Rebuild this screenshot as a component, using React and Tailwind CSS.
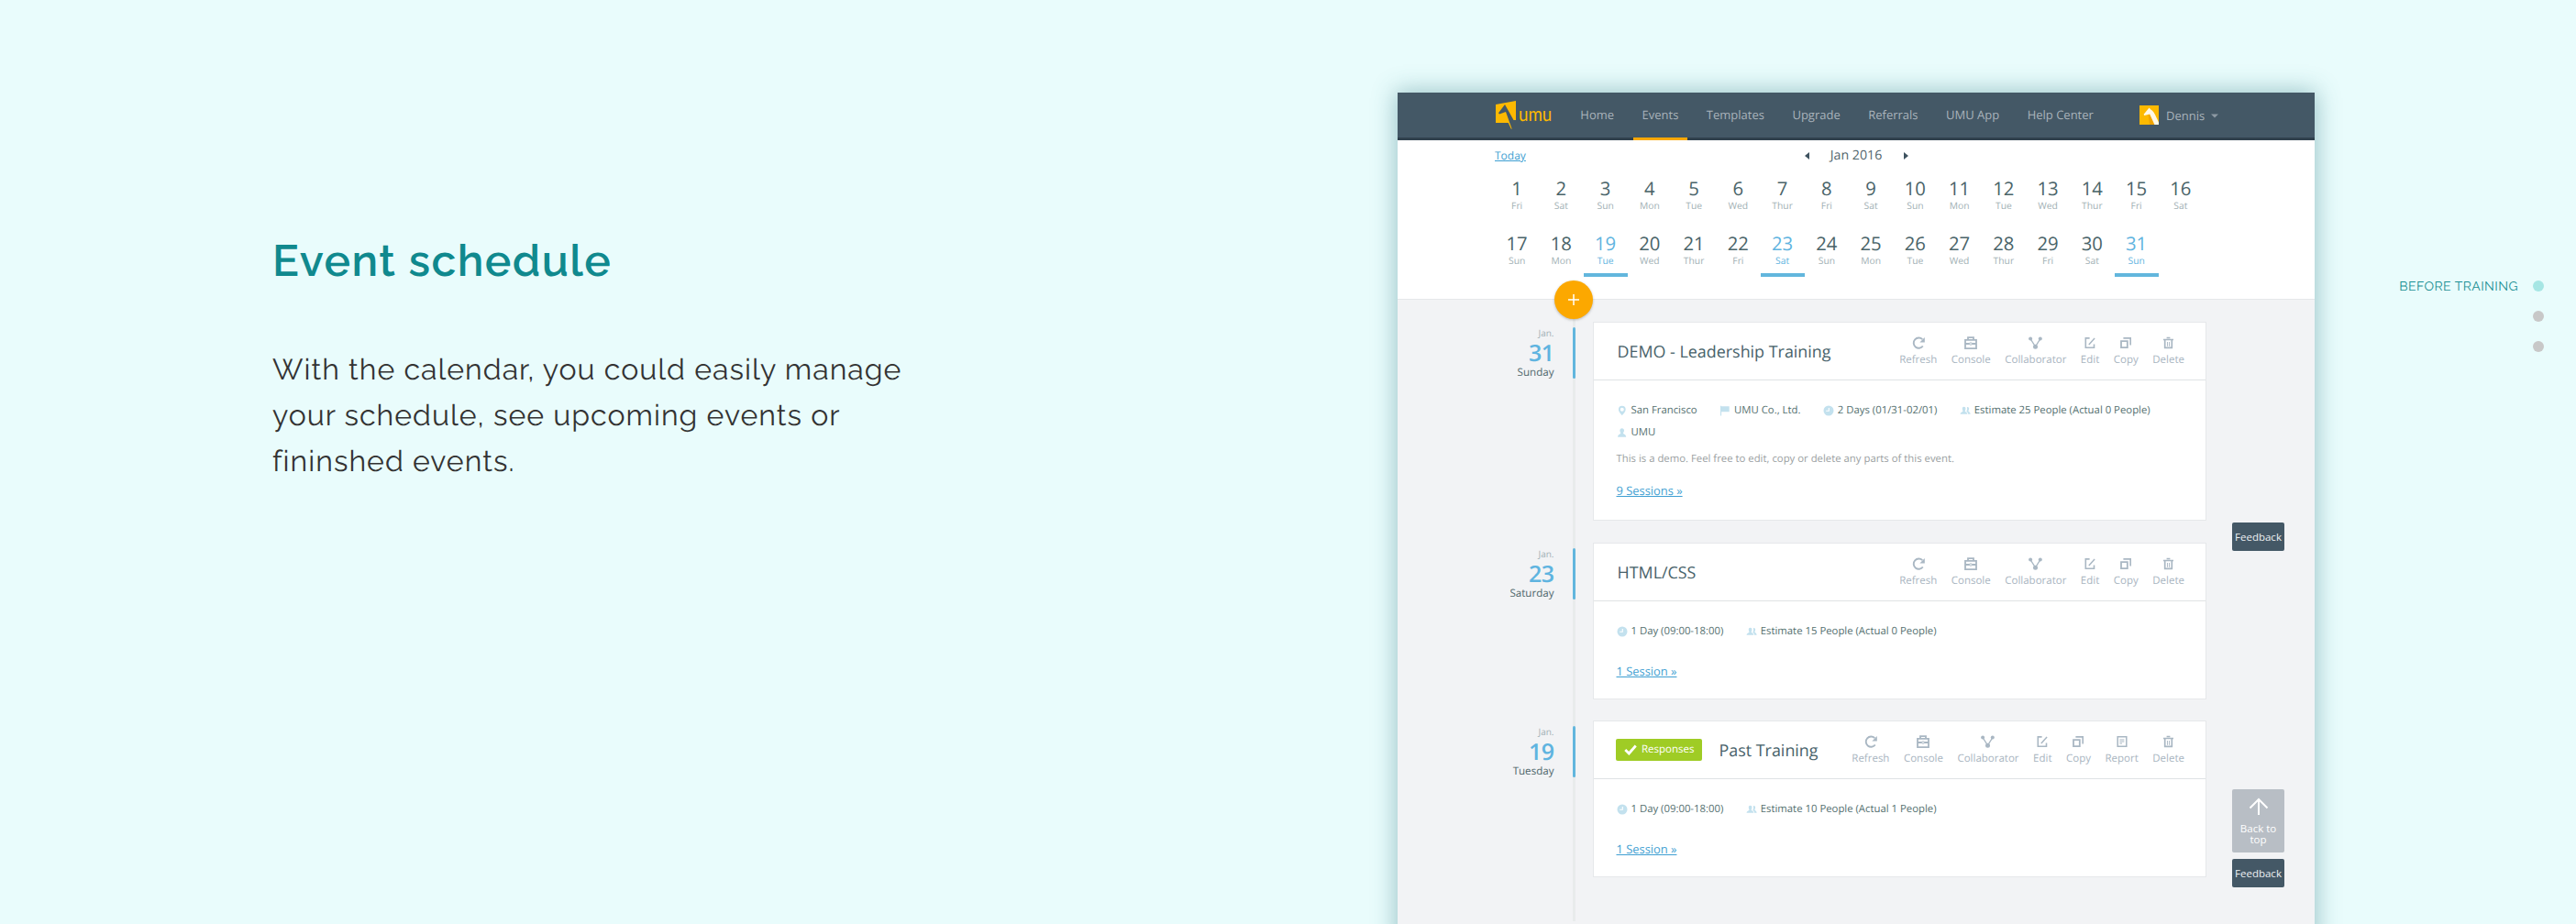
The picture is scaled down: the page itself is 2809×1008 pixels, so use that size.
const BLUE = 'text-[#5fb4e0]';

const Svg = ({ w, h, vb, className = '', children }) => (
  <svg width={w} height={h} viewBox={vb || `0 0 ${w} ${h}`} fill="none" className={`shrink-0 ${className}`}>
    {children}
  </svg>
);

const ICONS = {
  Refresh: (
    <Svg w={14} h={14}>
      <path d="M11.800 10.500A5.600 5.600 0 1 1 11.300 3.200" stroke="#a9b7c3" strokeWidth="1.900" />
      <path d="M13.800 1v5.400H8.400z" fill="#a9b7c3" />
    </Svg>
  ),
  Console: (
    <Svg w={14} h={14}>
      <path d="M1 3.800h12v9.300H1zM4 3.500V1.200h6v2.300M1 8h4.200M8.800 8H13" stroke="#a9b7c3" strokeWidth="1.800" />
      <ellipse cx="7" cy="8" rx="1.800" ry="1.100" stroke="#a9b7c3" />
    </Svg>
  ),
  Collaborator: (
    <Svg w={15} h={14}>
      <path d="M2.200 2.800 7.500 11l5.200-8.200" stroke="#a9b7c3" strokeWidth="1.300" />
      <circle cx="2.100" cy="2.600" r="2" fill="#a9b7c3" />
      <circle cx="12.800" cy="2.600" r="2" fill="#a9b7c3" />
      <circle cx="7.500" cy="11.300" r="2.500" fill="#a9b7c3" />
    </Svg>
  ),
  Edit: (
    <Svg w={12} h={14}>
      <path d="M5.600 1.900H1.300v10.400h9.200V8.600" stroke="#a9b7c3" strokeWidth="1.600" />
      <path d="m4.800 9 6.300-6.900" stroke="#a9b7c3" strokeWidth="1.500" />
    </Svg>
  ),
  Copy: (
    <Svg w={12} h={14}>
      <path d="M1 5.200h6.800v7H1z" stroke="#a9b7c3" strokeWidth="1.800" />
      <path d="M3.400 1.900h7.800v7.600" stroke="#a9b7c3" strokeWidth="1.600" />
    </Svg>
  ),
  Report: (
    <Svg w={12} h={14}>
      <path d="M1.200 1.700h9.600v10.600H1.200z" stroke="#a9b7c3" strokeWidth="1.500" />
      <path d="M3.400 5h5M3.400 7h5M3.400 9h2.600" stroke="#a9b7c3" />
    </Svg>
  ),
  Delete: (
    <Svg w={11} h={14}>
      <path d="M0 3.500h11M3.600 1.500h3.800" stroke="#a9b7c3" strokeWidth="1.500" />
      <path d="M1.700 4v8.300h7.600V4" stroke="#a9b7c3" strokeWidth="1.700" />
      <path d="M4.500 6v4.800M6.500 6v4.800" stroke="#a9b7c3" strokeWidth=".9" />
    </Svg>
  ),
};

const INFO = {
  pin: (
    <Svg w={12} h={12}>
      <path fillRule="evenodd" d="M5.800.8a3.900 3.900 0 0 0-3.900 3.900c0 2.600 2.400 4.300 3.900 6.500 1.500-2.200 3.900-3.900 3.900-6.500A3.900 3.900 0 0 0 5.800.8zm0 1.900a2 2 0 1 1 0 4 2 2 0 0 1 0-4z" fill="#c3e1ee" />
    </Svg>
  ),
  flag: (
    <Svg w={12} h={12}>
      <path d="M1 .7h1v.5h8.700v6H2.100v4.300H1z" fill="#c3e1ee" />
    </Svg>
  ),
  clock: (
    <Svg w={12} h={12}>
      <circle cx="6" cy="6" r="5.500" fill="#c3e1ee" />
      <path d="M6.300 3v3.300H3.200" stroke="#fff" strokeWidth="1.100" />
    </Svg>
  ),
  people: (
    <Svg w={12} h={12} vb="0 0 12.500 12">
      <path d="M4.800 1.500c1.300 0 1.900.9 1.900 2.100S6 6 5.900 6.500c0 1 2.800 1 2.800 3.500H.6C.6 7.500 3.700 7.500 3.700 6.500 3.600 6 2.900 4.800 2.900 3.600s.6-2.100 1.900-2.100z" fill="#c3e1ee" />
      <path d="M8.300 1.800c1.500-.3 2.300.6 2.300 1.900s-.8 2-.8 2.900c0 .8 2.400 1 2.400 3.400H9.500c0-1.800-1-2.200-1.800-2.900.1-1.200.7-1.200.7-2.900z" fill="#c3e1ee" />
    </Svg>
  ),
  person: (
    <Svg w={12} h={12}>
      <path d="M5.700 1.200c1.500 0 2.300 1 2.300 2.400S7.200 6 7 6.500c0 1.300 3.200 1 3.200 4.200H1.100c0-3.200 3.200-2.900 3.200-4.200-.2-.5-.9-1.500-.9-2.900s.8-2.400 2.300-2.400z" fill="#c3e1ee" />
    </Svg>
  ),
};

const NAV = ['Home', 'Events', 'Templates', 'Upgrade', 'Referrals', 'UMU App', 'Help Center'];
const WEEK = ['Fri', 'Sat', 'Sun', 'Mon', 'Tue', 'Wed', 'Thur'];
const DAYS = Array.from({ length: 31 }, (_, i) => ({ n: i + 1, w: WEEK[i % 7], on: [19, 23, 31].includes(i + 1) }));

const EVENTS = [
  {
    day: '31', week: 'Sunday', title: 'DEMO - Leadership Training', row: 'h-[241px] pt-[24px]', card: 'h-[217px]',
    info: [['pin', 'San Francisco'], ['flag', 'UMU Co., Ltd.'], ['clock', '2 Days (01/31-02/01)'], ['people', 'Estimate 25 People (Actual 0 People)'], ['person', 'UMU']],
    text: 'This is a demo. Feel free to edit, copy or delete any parts of this event.',
    link: '9 Sessions »', actions: ['Refresh', 'Console', 'Collaborator', 'Edit', 'Copy', 'Delete'],
  },
  {
    day: '23', week: 'Saturday', title: 'HTML/CSS', row: 'h-[195px] pt-[24px]', card: 'h-[171px]',
    info: [['clock', '1 Day (09:00-18:00)'], ['people', 'Estimate 15 People (Actual 0 People)']],
    link: '1 Session »', actions: ['Refresh', 'Console', 'Collaborator', 'Edit', 'Copy', 'Delete'],
  },
  {
    day: '19', week: 'Tuesday', title: 'Past Training', badge: 'Responses', row: 'h-[242px] pt-[23px]', card: 'h-[171px]',
    info: [['clock', '1 Day (09:00-18:00)'], ['people', 'Estimate 10 People (Actual 1 People)']],
    link: '1 Session »', actions: ['Refresh', 'Console', 'Collaborator', 'Edit', 'Copy', 'Report', 'Delete'],
  },
];

function Header() {
  return (
    <header className="h-[52px] bg-[#445866] border-b-[3px] border-[#30404d] flex pl-[106px]">
      <div className="flex h-[34px] w-[84px] mt-[8px]">
        <Svg w={24} h={34}>
          <path d="M1 5 23 1v21h-2.500L11 5 4 14.300l1 1.200 7-2.500 6.700 18.800-1-.2-3-6.600H1z" fill="#fdb900" />
        </Svg>
        <span className="ml-[1.500px] origin-left scale-x-[0.870] font-['Lato',sans-serif] text-[21.500px] leading-[30px] text-[#fdb900]">umu</span>
      </div>
      <nav className="flex text-[13px] text-[#a9b3bb] leading-[49px]">
        {NAV.map((n) => (
          <a key={n} className={`h-[52px] px-[9.300px] mr-[11.900px] whitespace-nowrap ${n === 'Events' ? 'border-b-[3px] border-[#fca800]' : ''}`}>{n}</a>
        ))}
      </nav>
      <div className="flex items-start ml-[29px] text-[13px] text-[#a9b3bb] leading-[51px]">
        <Svg w={21} h={21} className="mt-[14px]">
          <path d="M0 0h21v21H0z" fill="#fdb900" />
          <path d="M9.500 9 17 17v4h-6z" fill="#f0a400" />
          <path d="M10.600 2.500 12 4.300c3 1.700 4.800 5 6.400 8.600l2.600 5.500V21h-4.600L11.200 9.600 5.300 11 4.600 9.800z" fill="#fff8e6" />
        </Svg>
        <span className="ml-[8px]">Dennis</span>
        <Svg w={8} h={5} className="ml-[7px] mt-[23px]"><path d="M0 .5h8L4 4.500z" fill="#8d99a3" /></Svg>
      </div>
    </header>
  );
}

function Calendar() {
  return (
    <section className="h-[174px] bg-white border-b border-[#e5e7ea] px-[106px]">
      <div className="grid grid-cols-[1fr_auto_1fr] items-center h-[34px]">
        <a className="text-[12px] leading-[14px] text-[#3f9fd2] underline">Today</a>
        <div className="flex items-center text-[14.200px] leading-[20px] text-[#51656b]">
          <Svg w={5} h={8}><path d="M5 0v8L0 4z" fill="#3f5360" /></Svg>
          <span className="w-[103px] text-center">Jan 2016</span>
          <Svg w={5} h={8}><path d="M0 0v8l5-4z" fill="#3f5360" /></Svg>
        </div>
      </div>
      <div className="grid grid-cols-[repeat(16,48.250px)]">
        {DAYS.map((d) => (
          <div key={d.n} className={`h-[60.400px] pt-[5px] text-center ${d.on ? BLUE : 'text-[#4a6469]'}`}>
            <div className="text-[20.300px] leading-[26px]">{d.n}</div>
            <div className={`text-[10.300px] leading-[14px] ${d.on ? '' : 'text-[#9fb0b4]'}`}>{d.w}</div>
            {d.on && <div className="mt-[6px] h-[3.500px] bg-[#62b6dd]" />}
          </div>
        ))}
      </div>
    </section>
  );
}

function EventRow({ e }) {
  return (
    <div className="flex">
      <div className={`w-[191px] pr-[20.500px] text-right ${e.row}`}>
        <div className="mt-[5px] text-[10px] leading-[14px] text-[#a3b1b6]">Jan.</div>
        <div className="text-[25px] leading-[30px] font-semibold text-[#5fb4e0] tracking-[-0.500px]">{e.day}</div>
        <div className="text-[11.600px] leading-[14px] text-[#4f666b]">{e.week}</div>
      </div>
      <div className={`w-[3px] bg-[#e9ebec] ${e.row}`}>
        <div className="mt-[6px] h-[56px] rounded-sm bg-[#62b6dd]" />
      </div>
      <div className={`ml-[19px] ${e.row}`}>
        <article className={`w-[669px] bg-white border border-[#e6e8ea] ${e.card}`}>
          <div className="h-[63px] border-b border-[#dfe2e4] flex items-center pl-[24px] pr-[23px] text-[#a9b5bf]">
            {e.badge && (
              <span className="flex items-center h-[24px] w-[94px] mr-[17px] mt-[-1px] rounded-[2px] bg-[#9fcc25] text-white text-[11.500px] pl-[9px]">
                <Svg w={14} h={12} className="mr-[5px]"><path d="m1.300 6 4 4L12.700 1.500" stroke="#fff" strokeWidth="2.800" /></Svg>
                {e.badge}
              </span>
            )}
            <h2 className="mt-[2px] text-[17.900px] text-[#48626a] pl-[1.500px] mr-auto whitespace-nowrap">{e.title}</h2>
            <div className="flex gap-[15.500px] pt-px">
              {e.actions.map((a) => (
                <div key={a} className="flex flex-col items-center">
                  {ICONS[a]}
                  <span className="mt-[4px] text-[11.500px] leading-[15px]">{a}</span>
                </div>
              ))}
            </div>
          </div>
          <div className="pl-[24.500px] pt-[21px]">
            <div className="flex flex-wrap w-[620px] gap-x-[24.400px] text-[11.350px] leading-[24px] text-[#54706f]">
              {e.info.map(([i, t]) => (
                <span key={t} className="flex items-center gap-[4px] whitespace-nowrap">{INFO[i]}{t}</span>
              ))}
            </div>
            {e.text && <p className="mt-[7px] -mb-[7px] text-[11.350px] leading-[20px] text-[#9b9fa2]">{e.text}</p>}
            <a className="block mt-[21px] text-[12.900px] leading-[20px] text-[#3f9fd2] underline">{e.link}</a>
          </div>
        </article>
      </div>
    </div>
  );
}

const Feedback = ({ className }) => (
  <button className={`absolute left-[910px] w-[57px] h-[31px] rounded-[2px] bg-[#445866] text-[11.500px] text-[#eef1f3] ${className}`}>Feedback</button>
);

export default function App() {
  return (
    <main className="h-[1008px] w-[2809px] overflow-hidden bg-[#e9fcfc] flex font-['Open_Sans','Noto_Sans',sans-serif] [text-rendering:geometricPrecision]">
      <section className="w-[1524px] pl-[297px] pt-[255px] font-['Raleway','Lato',sans-serif]">
        <h1 className="text-[48px] leading-[60px] font-semibold text-[#10898e] tracking-[1.400px]">Event schedule</h1>
        <p className="mt-[64px] w-[720px] text-[32px] leading-[50px] font-normal text-[#333] tracking-[1.020px] whitespace-nowrap">
          With the calendar, you could easily manage<br />your schedule, see upcoming events or<br />fininshed events.
        </p>
      </section>
      <section className="relative mt-[101px] w-[1000px] h-[930px] bg-[#f2f3f5] shadow-[0_0_24px_2px_rgba(60,130,140,0.450)]">
        <Header />
        <Calendar />
        {EVENTS.map((e) => <EventRow key={e.day} e={e} />)}
        <button className="absolute left-[171px] top-[205px] size-[42px] rounded-full bg-[#fca800] shadow-[0_1px_3px_rgba(0,0,0,0.250)] flex items-center justify-center">
          <Svg w={12} h={12}><path d="M6 0v12M0 6h12" stroke="#fff" strokeWidth="1.500" /></Svg>
        </button>
        <Feedback className="top-[469px]" />
        <button className="absolute left-[910px] top-[760px] w-[57px] h-[69px] rounded-[2px] bg-[#b8bec5] text-white text-[11.500px] leading-[11.500px] flex flex-col items-center pt-[9px]">
          <Svg w={22} h={20}><path d="M11 19V2M1.500 11.500 11 2l9.500 9.500" stroke="#fff" strokeWidth="2" /></Svg>
          <span className="mt-[8px] w-[46px]">Back to top</span>
        </button>
        <Feedback className="top-[836px]" />
      </section>
      <aside className="w-[285px] pt-[302px] pr-[35px] flex justify-end items-start font-['Raleway','Lato',sans-serif]">
        <span className="mt-px text-[14px] leading-[20px] text-[#1a8f93] tracking-[0.450px]">BEFORE TRAINING</span>
        <div className="ml-[16px] mt-[4px] flex flex-col gap-[21px]">
          <i className="size-[12px] rounded-full bg-[#a6e6e4]" />
          <i className="size-[12px] rounded-full bg-[#c8c8c8]" />
          <i className="size-[12px] rounded-full bg-[#c8c8c8]" />
        </div>
      </aside>
    </main>
  );
}
